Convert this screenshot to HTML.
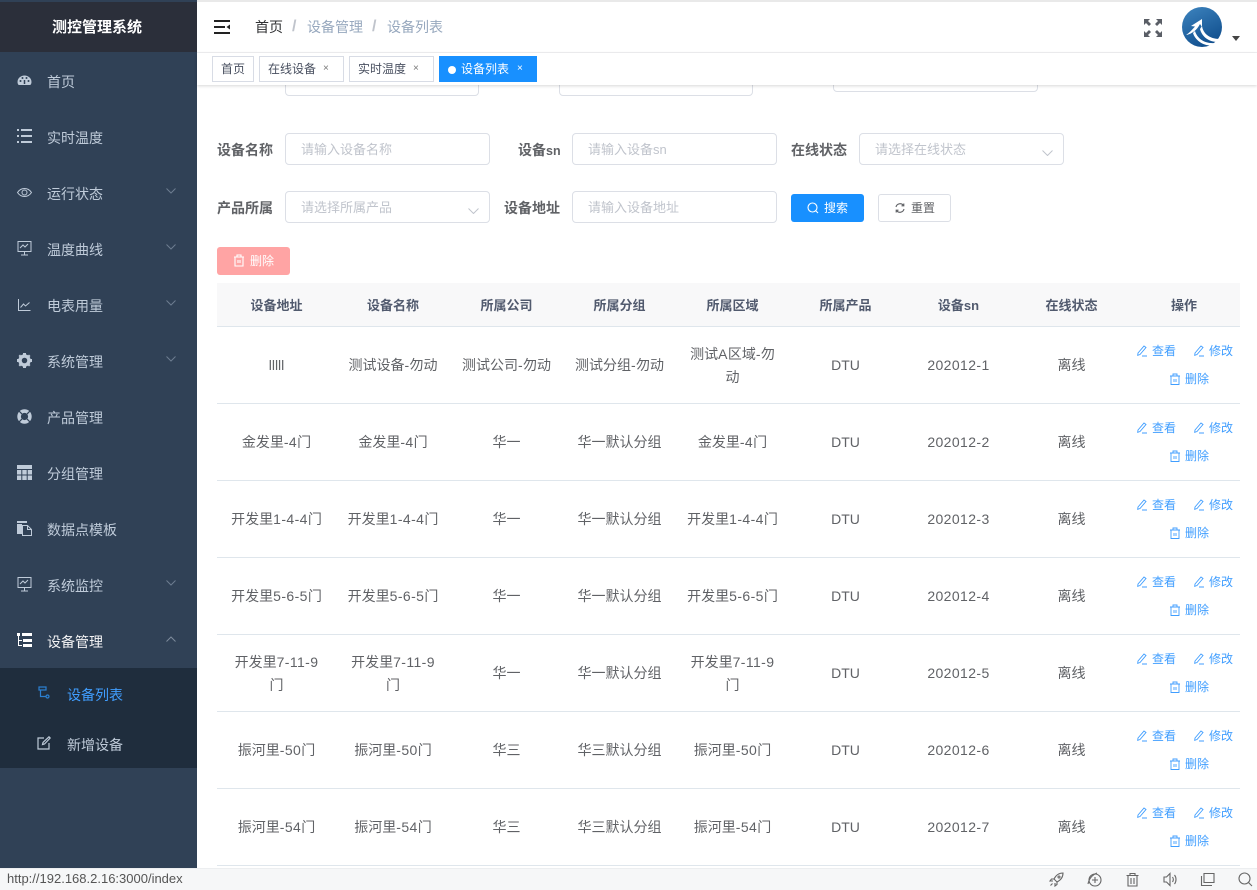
<!DOCTYPE html>
<html lang="zh-CN">
<head>
<meta charset="utf-8">
<title>测控管理系统</title>
<style>
*{box-sizing:border-box}
html,body{margin:0;padding:0;width:1257px;height:890px;overflow:hidden;background:#fff}
body{position:relative;font-family:"Liberation Sans","Noto Sans CJK SC",sans-serif;font-size:14px;color:#606266}
.a{position:absolute}
#side{left:0;top:0;width:197px;height:868px;background:#304156}
#logo{left:0;top:2px;width:197px;height:50px;background:#2b2f3a;color:#fff;font-weight:700;font-size:15px;text-align:center;line-height:52px;padding-right:3px}
.mi{position:absolute;left:47px;color:#bfcbd9;font-size:14px;line-height:20px;white-space:nowrap}
.ic{position:absolute;left:17px;width:15px;height:15px;overflow:visible}
.ch{position:absolute;left:166px;width:10px;height:6px}
#sub{left:0;top:668px;width:197px;height:100px;background:#1f2d3d}
#top{left:197px;top:2px;width:1060px;height:51px;background:#fff;border-bottom:1px solid #f0f1f3}
#topline{left:0;top:0;width:1257px;height:2px;background:#e9e9e9}
.bc{position:absolute;top:17px;line-height:20px;font-size:14px;white-space:nowrap}
#tags{left:197px;top:53px;width:1060px;height:32px;background:#fff;box-shadow:0 1px 3px rgba(0,0,0,.16);z-index:3}
.tag{position:absolute;top:3px;height:26px;border:1px solid #d8dce5;background:#fff;color:#495060;font-size:12px;line-height:24px;white-space:nowrap;padding-left:8px}
.tag i{position:absolute;font-style:normal;font-size:10px;top:0;color:#777}
.inp{position:absolute;height:32px;border:1px solid #dcdfe6;border-radius:4px;background:#fff;color:#c0c4cc;font-size:13px;line-height:32px;padding-left:15px;white-space:nowrap}
.lbl{position:absolute;font-weight:700;color:#606266;font-size:14px;line-height:20px;white-space:nowrap;text-align:right}
.arr{position:absolute;width:11px;height:6px}
.btn{position:absolute;height:28px;border-radius:3px;font-size:12px;line-height:26px;white-space:nowrap}
#tb{position:absolute;left:217px;top:283px;width:1023px;border-collapse:collapse;table-layout:fixed;font-size:14px}
#tb th{height:43px;background:#f8f8f9;color:#515a6e;font-size:13px;font-weight:700;border-bottom:1px solid #dfe6ec;padding:0}
#tb td{height:77px;border-bottom:1px solid #dfe6ec;text-align:center;color:#606266;font-size:14px;line-height:23px;padding:2px 10px 0;word-break:break-all}
#tb td:first-child{padding:2px 13px 0}
#tb td.n{padding:2px 0 0}
#tb td.o{padding:0;position:relative}
.l{letter-spacing:.4px}
.lk{position:absolute;color:#409eff;font-size:12px;line-height:16px;white-space:nowrap}
.lk svg{position:absolute;left:-16px;top:2px;width:12px;height:12px;stroke-width:.9}
#status{left:0;top:868px;width:1257px;height:22px;background:#f6f7f8;border-top:1px solid #eceef0;font-size:13px;color:#555;line-height:20px;padding-left:7px;z-index:5;font-family:"Liberation Sans",sans-serif}
#status svg{position:absolute;top:3px;width:15px;height:15px;fill:none;stroke:#666;stroke-width:1.1}
</style>
</head>
<body>
<div class="a" id="topline"></div>

<div class="a" id="side"></div>
<div class="a" id="logo">测控管理系统</div>

<svg class="ic" style="top:73px" viewBox="0 0 15 15"><path d="M7.500 2.500A7 6.500 0 0 0 .5 9c0 1.500.6 2.500 1.200 3h11.600c.6-.5 1.200-1.500 1.200-3a7 6.500 0 0 0-7-6.500z" fill="#bfcbd9"/><circle cx="3.500" cy="8" r="1" fill="#304156"/><circle cx="5.500" cy="5" r="1" fill="#304156"/><circle cx="9.500" cy="5" r="1" fill="#304156"/><circle cx="11.500" cy="8" r="1" fill="#304156"/><path d="M7.500 11V7" stroke="#304156" stroke-width="1.500"/></svg>
<div class="mi" style="top:72px">首页</div>

<svg class="ic" style="top:129px" viewBox="0 0 15 15" fill="#bfcbd9"><path d="M0 0h2v2H0zM0 6h2v2H0zM0 12h2v2H0zM4 0h11v2H4zM4 6h11v2H4zM4 12h11v2H4z"/></svg>
<div class="mi" style="top:128px">实时温度</div>

<svg class="ic" style="top:185px" viewBox="0 0 15 15" fill="none" stroke="#bfcbd9"><path d="M.5 7.500C2.500 4.500 5 3.500 7.500 3.500s5 1 7 4c-2 3-4.500 4-7 4s-5-1-7-4z"/><circle cx="7.500" cy="7.500" r="2.500"/></svg>
<div class="mi" style="top:184px">运行状态</div>
<svg class="ch" style="top:188px" viewBox="0 0 10 6" fill="none" stroke="#6d7d90"><path d="M.5.500 5 5 9.500.5"/></svg>

<svg class="ic" style="top:241px" viewBox="0 0 15 15" fill="none" stroke="#bfcbd9"><path d="M1 .5h13v10H1zM7.500 10.500v3M4 14h7M3 7l3-3 2 2 3-3"/></svg>
<div class="mi" style="top:240px">温度曲线</div>
<svg class="ch" style="top:244px" viewBox="0 0 10 6" fill="none" stroke="#6d7d90"><path d="M.5.500 5 5 9.500.5"/></svg>

<svg class="ic" style="top:298px" viewBox="0 0 15 15" fill="none" stroke="#bfcbd9"><path d="M1.500 1v11.500h12M3.500 9.500 6.500 6l2 2 4-3.500"/></svg>
<div class="mi" style="top:296px">电表用量</div>
<svg class="ch" style="top:300px" viewBox="0 0 10 6" fill="none" stroke="#6d7d90"><path d="M.5.500 5 5 9.500.5"/></svg>

<svg class="ic" style="top:353px" viewBox="0 0 15 15"><circle cx="7.500" cy="7.500" r="4.500" fill="none" stroke="#bfcbd9" stroke-width="3.500"/><path d="M6 0h3v2H6zM6 13h3v2H6zM0 6h2v3H0zM13 6h2v3h-2zM1.500 3 3 1.500 4.500 3 3 4.500zM10.500 3 12 1.500 13.500 3 12 4.500zM1.500 12 3 10.500 4.500 12 3 13.500zM10.500 12 12 10.500 13.500 12 12 13.500z" fill="#bfcbd9"/></svg>
<div class="mi" style="top:352px">系统管理</div>
<svg class="ch" style="top:356px" viewBox="0 0 10 6" fill="none" stroke="#6d7d90"><path d="M.5.500 5 5 9.500.5"/></svg>

<svg class="ic" style="top:409px" viewBox="0 0 15 15"><circle cx="7.500" cy="7.500" r="5.400" fill="none" stroke="#bfcbd9" stroke-width="3.600"/><path d="M6.900 0h1.200v4H6.900zM6.900 11h1.200v4H6.900z" fill="#304156" transform="rotate(45 7.500 7.500)"/><path d="M6.900 0h1.200v4H6.900zM6.900 11h1.200v4H6.900z" fill="#304156" transform="rotate(-45 7.500 7.500)"/></svg>
<div class="mi" style="top:408px">产品管理</div>

<svg class="ic" style="top:465px" viewBox="0 0 15 15" fill="#bfcbd9"><path d="M0 0h15v4H0zM0 5h4.300v4.500H0zM5.300 5h4.400v4.500H5.300zM10.700 5H15v4.500h-4.300zM0 10.500h4.300V15H0zM5.300 10.500h4.400V15H5.300zM10.700 10.500H15V15h-4.300z"/></svg>
<div class="mi" style="top:464px">分组管理</div>

<svg class="ic" style="top:521px" viewBox="0 0 15 15"><path d="M0 0h10v2H0zM0 3h5v10H0z" fill="#bfcbd9"/><path d="M5.500 4.500h5l4 4v6h-9z" fill="none" stroke="#bfcbd9"/><path d="M10.500 4.500v4h4" fill="none" stroke="#bfcbd9"/></svg>
<div class="mi" style="top:520px">数据点模板</div>

<svg class="ic" style="top:577px" viewBox="0 0 15 15" fill="none" stroke="#bfcbd9"><path d="M1 .5h13v10H1zM7.500 10.500v3M4 14h7M3 7l3-3 2 2 3-3"/></svg>
<div class="mi" style="top:576px">系统监控</div>
<svg class="ch" style="top:580px" viewBox="0 0 10 6" fill="none" stroke="#6d7d90"><path d="M.5.500 5 5 9.500.5"/></svg>

<svg class="ic" style="top:633px" viewBox="0 0 15 15"><path d="M0 0h3v3H0zM5 0h10v3H5zM6 6h9v3H6zM6 11h9v3H6z" fill="#fff"/><path d="M1.500 3v9.500H5M1.500 7.500H5" fill="none" stroke="#fff"/></svg>
<div class="mi" style="top:632px;color:#f4f4f5">设备管理</div>
<svg class="ch" style="top:636px" viewBox="0 0 10 6" fill="none" stroke="#7d8b9c"><path d="M.5 5.500 5 1l4.500 4.500"/></svg>

<div class="a" id="sub"></div>
<svg class="a" style="left:38px;top:686px;width:12px;height:14px" viewBox="0 0 12 14" fill="none" stroke="#2b7fd0" stroke-width="1.200"><path d="M1 1h7v3H1zM2.500 4v6.500H8"/><circle cx="9.500" cy="10.500" r="1.500"/></svg>
<div class="mi" style="left:67px;top:685px;color:#409eff">设备列表</div>
<svg class="a" style="left:37px;top:736px;width:14px;height:14px" viewBox="0 0 14 14" fill="none" stroke="#bfcbd9" stroke-width="1.200"><path d="M7 2H1v11h11V7M5.500 8.500l.5-2L12 .8l1.200 1.200L7.500 8z"/></svg>
<div class="mi" style="left:67px;top:735px">新增设备</div>

<!-- form partially hidden row -->
<div class="inp" style="left:285px;top:70px;width:194px;height:26px"></div>
<div class="inp" style="left:559px;top:70px;width:194px;height:26px"></div>
<div class="inp" style="left:833px;top:70px;width:205px;height:22px"></div>

<!-- header -->
<div class="a" id="top"></div>
<svg class="a" style="left:214px;top:20px;width:17px;height:14px;z-index:2" viewBox="0 0 17 14"><path d="M0 0h16v2H0zM0 6h11v2H0zM0 12h16v2H0z" fill="#222"/><path d="M16 4.500v5L12.500 7z" fill="#222"/></svg>
<div class="bc" style="left:255px;color:#303133">首页</div>
<div class="bc" style="left:292px;color:#c0c4cc;font-weight:700;font-size:16px">/</div>
<div class="bc" style="left:307px;color:#97a8be">设备管理</div>
<div class="bc" style="left:372px;color:#c0c4cc;font-weight:700;font-size:16px">/</div>
<div class="bc" style="left:387px;color:#97a8be">设备列表</div>

<svg class="a" style="left:1144px;top:19px;width:18px;height:18px" viewBox="0 0 18 18" fill="#5a5e66"><path d="M0 0h6L4 2l3 3-2 2-3-3-2 2zM18 0h-6l2 2-3 3 2 2 3-3 2 2zM0 18h6l-2-2 3-3-2-2-3 3-2-2zM18 18h-6l2-2-3-3 2-2 3 3 2-2z"/></svg>
<svg class="a" style="left:1182px;top:7px;width:40px;height:40px" viewBox="0 0 40 40"><defs><linearGradient id="g" x1="0.2" y1="0" x2="0.7" y2="1"><stop offset="0" stop-color="#3a80bb"/><stop offset="1" stop-color="#0f4d8c"/></linearGradient></defs><circle cx="20" cy="20" r="20" fill="url(#g)"/><path d="M20 12 9 19l4 .5C10 23 7 26 4 28c6-1 11-5 14-11l2 3z" fill="#fff"/><path d="M20 19c1 7 7 13 18 13l-2 3c-9 0-16-5-18-13z" fill="#fff"/><path d="M13 24c2 7 9 13 20 12l-3 2.500c-9 .5-17-5.500-19-12.500z" fill="#fff"/></svg>
<svg class="a" style="left:1232px;top:36px;width:8px;height:5px" viewBox="0 0 8 5"><path d="M0 0h8L4 5z" fill="#444"/></svg>

<!-- tags -->
<div class="a" id="tags">
  <div class="tag" style="left:15px;width:42px">首页</div>
  <div class="tag" style="left:62px;width:85px">在线设备<i style="left:63px">×</i></div>
  <div class="tag" style="left:152px;width:85px">实时温度<i style="left:63px">×</i></div>
  <div class="tag" style="left:242px;width:98px;background:#1890ff;border-color:#1890ff;color:#fff;padding-left:21px"><span style="position:absolute;left:8px;top:9px;width:8px;height:8px;border-radius:50%;background:#fff"></span>设备列表<i style="left:77px;color:#fff">×</i></div>
</div>

<!-- form -->
<div class="lbl" style="left:217px;top:140px">设备名称</div>
<div class="inp" style="left:285px;top:133px;width:205px">请输入设备名称</div>
<div class="lbl" style="left:518px;top:140px">设备<span style="font-size:12.500px">sn</span></div>
<div class="inp" style="left:572px;top:133px;width:205px">请输入设备sn</div>
<div class="lbl" style="left:791px;top:140px">在线状态</div>
<div class="inp" style="left:859px;top:133px;width:205px">请选择在线状态</div>
<svg class="arr" style="left:1042px;top:150px" viewBox="0 0 11 6" fill="none" stroke="#c0c4cc"><path d="M.5.500 5.500 5.500 10.500.5"/></svg>

<div class="lbl" style="left:217px;top:198px">产品所属</div>
<div class="inp" style="left:285px;top:191px;width:205px">请选择所属产品</div>
<svg class="arr" style="left:468px;top:208px" viewBox="0 0 11 6" fill="none" stroke="#c0c4cc"><path d="M.5.500 5.500 5.500 10.500.5"/></svg>
<div class="lbl" style="left:504px;top:198px">设备地址</div>
<div class="inp" style="left:572px;top:191px;width:205px">请输入设备地址</div>

<div class="btn" style="left:791px;top:194px;width:73px;background:#1890ff;color:#fff;padding-left:33px;line-height:28px">搜索</div>
<svg class="a" style="left:807px;top:202px;width:12px;height:12px" viewBox="0 0 12 12" fill="none" stroke="#fff" stroke-width="1.100"><circle cx="5.500" cy="5.500" r="4.500"/><path d="M9 9l2 2"/></svg>
<div class="btn" style="left:878px;top:194px;width:73px;border:1px solid #dcdfe6;color:#606266;padding-left:32px">重置</div>
<svg class="a" style="left:894px;top:202px;width:12px;height:12px" viewBox="0 0 12 12" fill="none" stroke="#606266" stroke-width="1.100"><path d="M2 5a4.200 4.200 0 0 1 7.500-1.500M10 7a4.200 4.200 0 0 1-7.500 1.500M9.800 1.500v2.300H7.500M2.200 10.500V8.200h2.300"/></svg>

<div class="btn" style="left:217px;top:247px;width:73px;background:#ffa4a4;color:#fff;padding-left:33px;line-height:28px">删除</div>
<svg class="a" style="left:233px;top:254px;width:12px;height:13px" viewBox="0 0 12 13" fill="none" stroke="#fff" stroke-width="1.100"><path d="M1 3h10M4 3V1h4v2M2 3v9h8V3M5 6v3M7 6v3"/></svg>

<!-- table -->
<table id="tb">
<colgroup><col style="width:119px"><col style="width:114px"><col style="width:113px"><col style="width:113px"><col style="width:113px"><col style="width:113px"><col style="width:113px"><col style="width:113px"><col style="width:112px"></colgroup>
<tr><th>设备地址</th><th>设备名称</th><th>所属公司</th><th>所属分组</th><th>所属区域</th><th>所属产品</th><th>设备sn</th><th>在线状态</th><th>操作</th></tr>
<tr><td>lllll</td><td class="n">测试设备<span class="l">-</span>勿动</td><td class="n">测试公司<span class="l">-</span>勿动</td><td class="n">测试分组<span class="l">-</span>勿动</td><td>测试<span class="l">A</span>区域<span class="l">-</span>勿动</td><td>DTU</td><td class="l">202012-1</td><td>离线</td><td class="o"></td></tr>
<tr><td>金发里<span class="l">-4</span>门</td><td>金发里<span class="l">-4</span>门</td><td>华一</td><td>华一默认分组</td><td>金发里<span class="l">-4</span>门</td><td>DTU</td><td class="l">202012-2</td><td>离线</td><td class="o"></td></tr>
<tr><td>开发里<span class="l">1-4-4</span>门</td><td>开发里<span class="l">1-4-4</span>门</td><td>华一</td><td>华一默认分组</td><td>开发里<span class="l">1-4-4</span>门</td><td>DTU</td><td class="l">202012-3</td><td>离线</td><td class="o"></td></tr>
<tr><td>开发里<span class="l">5-6-5</span>门</td><td>开发里<span class="l">5-6-5</span>门</td><td>华一</td><td>华一默认分组</td><td>开发里<span class="l">5-6-5</span>门</td><td>DTU</td><td class="l">202012-4</td><td>离线</td><td class="o"></td></tr>
<tr><td>开发里<span class="l">7-11-9</span>门</td><td>开发里<span class="l">7-11-9</span>门</td><td>华一</td><td>华一默认分组</td><td>开发里<span class="l">7-11-9</span>门</td><td>DTU</td><td class="l">202012-5</td><td>离线</td><td class="o"></td></tr>
<tr><td>振河里<span class="l">-50</span>门</td><td>振河里<span class="l">-50</span>门</td><td>华三</td><td>华三默认分组</td><td>振河里<span class="l">-50</span>门</td><td>DTU</td><td class="l">202012-6</td><td>离线</td><td class="o"></td></tr>
<tr><td>振河里<span class="l">-54</span>门</td><td>振河里<span class="l">-54</span>门</td><td>华三</td><td>华三默认分组</td><td>振河里<span class="l">-54</span>门</td><td>DTU</td><td class="l">202012-7</td><td>离线</td><td class="o"></td></tr>
</table>

<!-- operations: row 1 -->
<div class="lk" style="left:1152px;top:343px"><svg viewBox="0 0 12 12" fill="none" stroke="#409eff"><path d="M2 8 8 1l2 1.500-6 7-2.300.8zM6 11h5"/></svg>查看</div>
<div class="lk" style="left:1209px;top:343px"><svg viewBox="0 0 12 12" fill="none" stroke="#409eff"><path d="M2 8 8 1l2 1.500-6 7-2.300.8zM6 11h5"/></svg>修改</div>
<div class="lk" style="left:1185px;top:371px"><svg viewBox="0 0 12 12" fill="none" stroke="#409eff"><path d="M1 3h10M4 3V1h4v2M2 3v8.500h8V3M5 6v3M7 6v3"/></svg>删除</div>
<!-- row 2 -->
<div class="lk" style="left:1152px;top:420px"><svg viewBox="0 0 12 12" fill="none" stroke="#409eff"><path d="M2 8 8 1l2 1.500-6 7-2.300.8zM6 11h5"/></svg>查看</div>
<div class="lk" style="left:1209px;top:420px"><svg viewBox="0 0 12 12" fill="none" stroke="#409eff"><path d="M2 8 8 1l2 1.500-6 7-2.300.8zM6 11h5"/></svg>修改</div>
<div class="lk" style="left:1185px;top:448px"><svg viewBox="0 0 12 12" fill="none" stroke="#409eff"><path d="M1 3h10M4 3V1h4v2M2 3v8.500h8V3M5 6v3M7 6v3"/></svg>删除</div>
<!-- row 3 -->
<div class="lk" style="left:1152px;top:497px"><svg viewBox="0 0 12 12" fill="none" stroke="#409eff"><path d="M2 8 8 1l2 1.500-6 7-2.300.8zM6 11h5"/></svg>查看</div>
<div class="lk" style="left:1209px;top:497px"><svg viewBox="0 0 12 12" fill="none" stroke="#409eff"><path d="M2 8 8 1l2 1.500-6 7-2.300.8zM6 11h5"/></svg>修改</div>
<div class="lk" style="left:1185px;top:525px"><svg viewBox="0 0 12 12" fill="none" stroke="#409eff"><path d="M1 3h10M4 3V1h4v2M2 3v8.500h8V3M5 6v3M7 6v3"/></svg>删除</div>
<!-- row 4 -->
<div class="lk" style="left:1152px;top:574px"><svg viewBox="0 0 12 12" fill="none" stroke="#409eff"><path d="M2 8 8 1l2 1.500-6 7-2.300.8zM6 11h5"/></svg>查看</div>
<div class="lk" style="left:1209px;top:574px"><svg viewBox="0 0 12 12" fill="none" stroke="#409eff"><path d="M2 8 8 1l2 1.500-6 7-2.300.8zM6 11h5"/></svg>修改</div>
<div class="lk" style="left:1185px;top:602px"><svg viewBox="0 0 12 12" fill="none" stroke="#409eff"><path d="M1 3h10M4 3V1h4v2M2 3v8.500h8V3M5 6v3M7 6v3"/></svg>删除</div>
<!-- row 5 -->
<div class="lk" style="left:1152px;top:651px"><svg viewBox="0 0 12 12" fill="none" stroke="#409eff"><path d="M2 8 8 1l2 1.500-6 7-2.300.8zM6 11h5"/></svg>查看</div>
<div class="lk" style="left:1209px;top:651px"><svg viewBox="0 0 12 12" fill="none" stroke="#409eff"><path d="M2 8 8 1l2 1.500-6 7-2.300.8zM6 11h5"/></svg>修改</div>
<div class="lk" style="left:1185px;top:679px"><svg viewBox="0 0 12 12" fill="none" stroke="#409eff"><path d="M1 3h10M4 3V1h4v2M2 3v8.500h8V3M5 6v3M7 6v3"/></svg>删除</div>
<!-- row 6 -->
<div class="lk" style="left:1152px;top:728px"><svg viewBox="0 0 12 12" fill="none" stroke="#409eff"><path d="M2 8 8 1l2 1.500-6 7-2.300.8zM6 11h5"/></svg>查看</div>
<div class="lk" style="left:1209px;top:728px"><svg viewBox="0 0 12 12" fill="none" stroke="#409eff"><path d="M2 8 8 1l2 1.500-6 7-2.300.8zM6 11h5"/></svg>修改</div>
<div class="lk" style="left:1185px;top:756px"><svg viewBox="0 0 12 12" fill="none" stroke="#409eff"><path d="M1 3h10M4 3V1h4v2M2 3v8.500h8V3M5 6v3M7 6v3"/></svg>删除</div>
<!-- row 7 -->
<div class="lk" style="left:1152px;top:805px"><svg viewBox="0 0 12 12" fill="none" stroke="#409eff"><path d="M2 8 8 1l2 1.500-6 7-2.300.8zM6 11h5"/></svg>查看</div>
<div class="lk" style="left:1209px;top:805px"><svg viewBox="0 0 12 12" fill="none" stroke="#409eff"><path d="M2 8 8 1l2 1.500-6 7-2.300.8zM6 11h5"/></svg>修改</div>
<div class="lk" style="left:1185px;top:833px"><svg viewBox="0 0 12 12" fill="none" stroke="#409eff"><path d="M1 3h10M4 3V1h4v2M2 3v8.500h8V3M5 6v3M7 6v3"/></svg>删除</div>

<!-- status bar -->
<div class="a" id="status">http://192.168.2.16:3000/index
  <svg style="left:1049px" viewBox="0 0 15 15"><path d="M5 7c2-4 5-6 9-6 0 4-2 7-6 9zM5 7H2.500L1 9h3M8 10v2.500L6 14v-3M1.500 13.500l2-2"/><circle cx="10" cy="5" r="1"/></svg>
  <svg style="left:1087px" viewBox="0 0 15 15"><circle cx="8" cy="8" r="6"/><path d="M8 5v6M5 8h6M1 12C2 7 5 3 10 1"/></svg>
  <svg style="left:1125px" viewBox="0 0 15 15"><path d="M1.500 3.500h12M5 3.500V1.500h5v2M3 3.500V14h9V3.500M6 6v6M9 6v6"/></svg>
  <svg style="left:1163px" viewBox="0 0 15 15"><path d="M1 5h2.500L7 1.500v12L3.500 10H1zM9.500 5c1 1.500 1 3.500 0 5M11.500 3c2 2.500 2 6.500 0 9"/></svg>
  <svg style="left:1200px" viewBox="0 0 15 15"><path d="M4 1.500h10v9H4zM1.500 4v9.500H12"/></svg>
  <svg style="left:1238px" viewBox="0 0 15 15"><circle cx="6.500" cy="6.500" r="5.500"/><path d="M10.500 10.500l3.500 3.500"/></svg>
</div>
</body>
</html>
